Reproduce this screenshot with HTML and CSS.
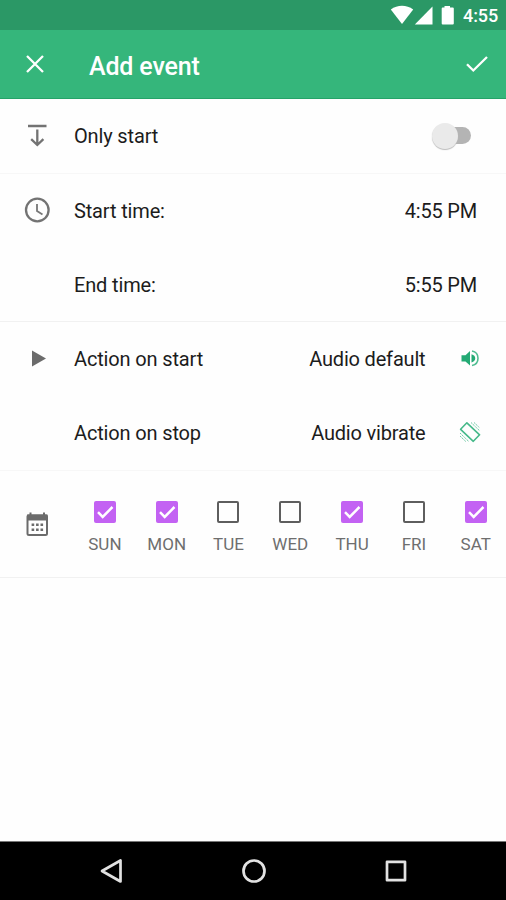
FILE: index.html
```html
<!DOCTYPE html>
<html lang="en">
<head>
<meta charset="utf-8">
<title>Add event</title>
<link rel="stylesheet" href="styles.css">
</head>
<body>
<div class="screen">
  <div class="status">
    <svg class="status-icons" viewBox="0 0 66 30" aria-hidden="true">
      <path d="M.8 9.600C7.500 4.600 16.500 4.600 23.200 9.600L12 24z"/>
      <path d="M42.500 6.500V24.500H24.800z"/>
      <path d="M54.500 6h5.500v1.500h2.800q1 0 1 1v15q0 1-1 1H52.700q-1 0-1-1v-15q0-1 1-1h1.800z"/>
    </svg>
    <span class="clock">4:55</span>
  </div>
  <header class="appbar">
    <svg class="close" viewBox="0 0 18 18" aria-label="Close"><path d="M1 1l16 16M17 1L1 17"/></svg>
    <h1>Add event</h1>
    <svg class="done" viewBox="0 0 24 18" aria-label="Save"><path d="M2 9.200l6.300 6.300L22 2"/></svg>
  </header>
  <main>
    <section class="mode">
      <div class="row">
        <svg class="lead" viewBox="0 0 74 74"><path class="thin" d="M28 27H46.500M37.300 30.500V46M31.200 40.200l6.100 5.800 6.100-5.800"/></svg>
        <span class="label">Only start</span>
        <span class="switch"></span>
      </div>
    </section>
    <section class="times">
      <div class="row">
        <svg class="lead" viewBox="0 0 74 74"><circle class="thin" cx="37.300" cy="36" r="11.300"/><path class="hands" d="M37 30V37L42.500 40.500"/></svg>
        <span class="label">Start time:</span>
        <span class="value time">4:55 PM</span>
      </div>
      <div class="row">
        <span class="lead"></span>
        <span class="label">End time:</span>
        <span class="value time">5:55 PM</span>
      </div>
    </section>
    <section class="actions">
      <div class="row">
        <svg class="lead" viewBox="0 0 74 74"><path class="solid" d="M32 28.500L46 36.500L32 44.500z"/></svg>
        <span class="label">Action on start</span>
        <span class="value audio">Audio default</span>
        <svg class="trail" viewBox="0 0 24 24"><path class="green" d="M3.500 8.200H7.500L12 4V18.500L7.500 14.500H3.500z"/><path class="green" d="M13.500 7.200c5 1.200 5 7 0 8.300z"/><path class="wave" d="M14 4c8 1.500 8 13 0 14.500"/></svg>
      </div>
      <div class="row">
        <span class="lead"></span>
        <span class="label">Action on stop</span>
        <span class="value audio">Audio vibrate</span>
        <svg class="trail" viewBox="0 0 24 24"><path class="phone" d="M8.900 1.800L21.600 13.800L15.300 20.300L2.600 8.300z"/><path class="buzz" d="M13 1.500l8.800 8.400M16 1.500l5.500 5.200M2 12l9 8.700M2 15l6 5.700"/></svg>
      </div>
    </section>
    <section class="days">
      <svg class="calendar" viewBox="0 0 24 26">
        <path class="frame" d="M3.500 4.500H21Q22 4.500 22 5.500V22.500Q22 24 20.500 24H4Q2.500 24 2.500 22.500V5.500Q2.500 4.500 3.500 4.500z"/>
        <path class="solid" d="M2 3.500h2.500v-2h2v2H18v-2h2v2h2.500v6H2z"/>
        <path class="dots" d="M6.600 13.800h11.500M6.600 18.800h11.500"/>
      </svg>
      <div class="week">
        <div class="day"><span class="box on"><svg viewBox="0 0 22 22"><path d="M4 11.200l4.700 4.700L18.500 6"/></svg></span><span>SUN</span></div>
        <div class="day"><span class="box on"><svg viewBox="0 0 22 22"><path d="M4 11.200l4.700 4.700L18.500 6"/></svg></span><span>MON</span></div>
        <div class="day"><span class="box"></span><span>TUE</span></div>
        <div class="day"><span class="box"></span><span>WED</span></div>
        <div class="day"><span class="box on"><svg viewBox="0 0 22 22"><path d="M4 11.200l4.700 4.700L18.500 6"/></svg></span><span>THU</span></div>
        <div class="day"><span class="box"></span><span>FRI</span></div>
        <div class="day"><span class="box on"><svg viewBox="0 0 22 22"><path d="M4 11.200l4.700 4.700L18.500 6"/></svg></span><span>SAT</span></div>
      </div>
    </section>
  </main>
  <nav class="navbar">
    <svg viewBox="0 0 24 26"><path d="M2 13L20.500 2.500V23.500z"/></svg>
    <svg viewBox="0 0 24 26"><circle cx="12" cy="13" r="10.500"/></svg>
    <svg viewBox="0 0 24 26"><rect x="3" y="3.800" width="18" height="18.400"/></svg>
  </nav>
</div>
</body>
</html>
```

FILE: styles.css
```css
* { box-sizing: border-box; }
body {
  margin: 0;
  background: #fefefe;
  color: #1c1c1c;
  font-family: Roboto, sans-serif;
  font-size: 20px;
}
svg { display: block; flex: none; }
.screen {
  display: flex;
  flex-direction: column;
  width: 506px;
  height: 900px;
}
.status {
  display: flex;
  align-items: center;
  justify-content: flex-end;
  height: 30px;
  padding-right: 8px;
  background: #2b9866;
  color: #fff;
}
.status-icons { width: 66px; height: 30px; fill: #fff; margin-right: 7px; }
.clock { width: 35px; padding-top: 2px; font-size: 18px; font-weight: 500; line-height: 28px; letter-spacing: -.1px; white-space: nowrap; }
.appbar {
  display: flex;
  align-items: center;
  height: 69px;
  padding: 0 17px 0 26px;
  background: #35b67b;
  border-bottom: 1px solid #25a368;
  color: #fff;
}
.appbar svg { fill: none; stroke: #fff; stroke-width: 2.300; }
.close { width: 18px; height: 18px; }
.done { width: 24px; height: 18px; margin-left: auto; }
h1 { margin: 5px 0 0 45px; font-size: 25px; font-weight: 500; line-height: 30px; letter-spacing: -.15px; }
main { flex: 1; }
section { border-bottom: 1px solid #f1f1f1; }
.mode { height: 75px; border-color: #f7f7f7; }
.times { height: 148px; }
.actions { height: 149px; border-color: #f7f7f7; }
.row { display: flex; align-items: center; height: 74px; padding-right: 24px; }
.lead { width: 74px; height: 74px; flex: none; }
.thin { fill: none; stroke: #737373; stroke-width: 2.300; }
.hands { fill: none; stroke: #777; stroke-width: 1.800; }
.solid { fill: #6b6b6b; }
.label { line-height: 26px; letter-spacing: -.15px; white-space: nowrap; }
.value { margin-left: auto; line-height: 26px; letter-spacing: -.18px; white-space: nowrap; }
.time { margin-right: 5px; }
.audio { margin-right: 32.500px; }
.trail { width: 24px; height: 24px; }
.green { fill: #23aa74; }
.wave { fill: none; stroke: #4fbd91; stroke-width: 1.600; }
.phone { fill: none; stroke: #46b98a; stroke-width: 1.600; stroke-linejoin: round; }
.buzz { fill: none; stroke: #70c9a4; stroke-width: 1; stroke-dasharray: 1.700 .7; }
.switch { position: relative; width: 39px; height: 26px; margin-left: auto; margin-right: 11px; }
.switch::before { content: ""; position: absolute; inset: 4px 0 5px 8px; border-radius: 9px; background: #b4b4b4; }
.switch::after { content: ""; position: absolute; left: 0; top: 0; width: 26px; height: 26px; border-radius: 50%; background: #eaeaea; box-shadow: 0 1px 1px #bbb; }
.days { display: flex; align-items: center; height: 107px; }
.calendar { width: 24px; height: 26px; margin-left: 25px; }
.week { display: grid; grid-template-columns: repeat(7, 61.800px); margin: 7px 0 0 25px; flex: none; }
.frame { fill: none; stroke: #6b6b6b; stroke-width: 2; }
.dots { fill: none; stroke: #6b6b6b; stroke-width: 2.600; stroke-dasharray: 2.600 1.850; }
.day { display: flex; flex-direction: column; align-items: center; gap: 10px; font-size: 17px; line-height: 22px; color: #6e6e6e; }
.box { width: 22px; height: 22px; border: 2px solid #5e5e5e; border-radius: 2px; }
.box.on { border: 0; background: #c362f3; }
.box svg { width: 22px; height: 22px; fill: none; stroke: #fff; stroke-width: 2.500; }
.navbar {
  display: flex;
  align-items: center;
  justify-content: space-between;
  height: 59px;
  padding: 0 98px 0 100px;
  background: #000;
  border-top: 1px solid #777;
}
.navbar svg { width: 24px; height: 26px; fill: none; stroke: #e2e2e2; stroke-width: 2.700; stroke-linejoin: round; }
```
